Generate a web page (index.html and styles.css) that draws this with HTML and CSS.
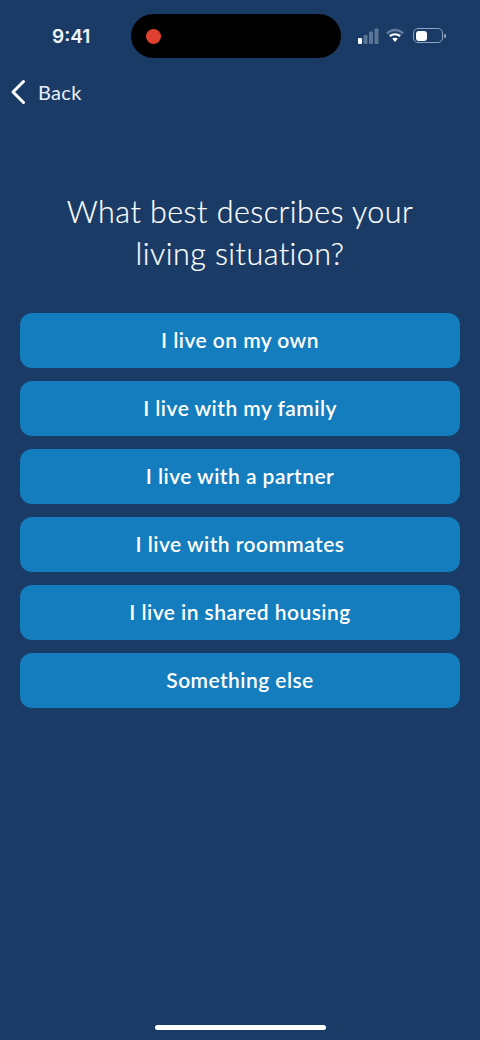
FILE: index.html
```html
<!DOCTYPE html>
<html lang="en">
<head>
<meta charset="utf-8">
<title>Living situation</title>
<link rel="stylesheet" href="styles.css">
</head>
<body>
<div class="screen">
  <header class="status">
    <span class="time">9:41</span>
    <div class="island"><span class="rec"></span></div>
    <div class="indicators">
      <svg class="signal" width="21" height="16" viewBox="0 0 21 16">
        <rect x="0" y="10" width="4" height="6" rx="1" fill="#fff"/>
        <rect x="5.5" y="7" width="4" height="9" rx="1" fill="#5a7596"/>
        <rect x="11" y="3.5" width="4" height="12.5" rx="1" fill="#5a7596"/>
        <rect x="16.5" y="0.5" width="4" height="15.5" rx="1" fill="#5a7596"/>
      </svg>
      <svg class="wifi" width="18" height="15" viewBox="0 0 18 15">
        <path d="M1 5.5 C5.5 0.8 12.5 0.8 17 5.5" fill="none" stroke="#5f7b9c" stroke-width="2.6"/>
        <path d="M3.8 8.2 C6.8 5.6 11.2 5.6 14.2 8.2" fill="none" stroke="#fff" stroke-width="2.2"/>
        <path d="M6.2 10.6 C8 9.4 10 9.4 11.8 10.6 L9 14 Z" fill="#fff"/>
      </svg>
      <div class="battery"><span class="charge"></span></div>
      <span class="nub"></span>
    </div>
  </header>

  <a class="back" href="#">
    <svg width="16" height="26" viewBox="0 0 16 26"><path d="M13.5 2.5 L3 13 L13.5 23.5" fill="none" stroke="#fff" stroke-width="3" stroke-linecap="round" stroke-linejoin="round"/></svg>
    <span>Back</span>
  </a>

  <main class="content">
    <h1 class="title">What best describes your<br>living situation?</h1>
    <div class="options">
      <button class="option">I live on my own</button>
      <button class="option">I live with my family</button>
      <button class="option">I live with a partner</button>
      <button class="option">I live with roommates</button>
      <button class="option">I live in shared housing</button>
      <button class="option">Something else</button>
    </div>
  </main>

  <div class="home"></div>
</div>
</body>
</html>
```

FILE: styles.css
```css
* { box-sizing: border-box; }
html, body { margin: 0; padding: 0; }
body { background: #1b3b67; font-family: "Lato", "Liberation Sans", sans-serif; color: #fff; }
.screen { width: 480px; height: 1040px; background: #1b3b67; display: flex; flex-direction: column; position: relative; overflow: hidden; }
.status { height: 72px; padding-top: 14px; display: flex; align-items: flex-start; flex-shrink: 0; }
.time { width: 131px; padding-left: 52px; margin-top: 11px; font-family: "Inter", "Liberation Sans", sans-serif; font-weight: 600; font-size: 19px; line-height: 24px; color: #f2f5f9; }
.island { width: 210px; height: 44px; border-radius: 22px; background: #000; display: flex; align-items: center; padding-left: 15px; }
.rec { width: 15px; height: 15px; border-radius: 50%; background: #e0402f; }
.indicators { display: flex; align-items: center; margin-left: 17px; height: 44px; }
.signal { margin-right: 7px; margin-top: -1px; }
.wifi { margin-right: 9px; margin-top: -1px; }
.battery { width: 30px; height: 15px; border: 1.2px solid #8ea3bd; border-radius: 5px; padding: 1.5px; margin-top: -1px; }
.charge { display: block; width: 11px; height: 10px; background: #fff; border-radius: 3px; }
.nub { width: 1.5px; height: 4px; background: #8ea3bd; margin-left: 1px; margin-top: -1px; border-radius: 1px; }
.back { display: flex; align-items: center; height: 40px; padding-left: 10px; gap: 12px; color: #e9eff6; text-decoration: none; font-size: 20px; letter-spacing: 0.3px; flex-shrink: 0; }
.content { padding: 0 20px; display: flex; flex-direction: column; }
.title { margin: 78px 0 39px; font-weight: 300; font-size: 30.5px; line-height: 42px; letter-spacing: 0.45px; text-align: center; color: #fff; -webkit-text-stroke: 0.2px #fff; }
.options { display: flex; flex-direction: column; gap: 13px; }
.option { height: 55px; border: 0; border-radius: 12px; background: #147dbd; color: #fff; font-family: inherit; font-weight: 600; font-size: 21px; letter-spacing: 0.45px; text-align: center; padding: 0 0 2px; }
.home { position: absolute; left: 155px; bottom: 10px; width: 171px; height: 5px; border-radius: 3px; background: #fff; }
```
